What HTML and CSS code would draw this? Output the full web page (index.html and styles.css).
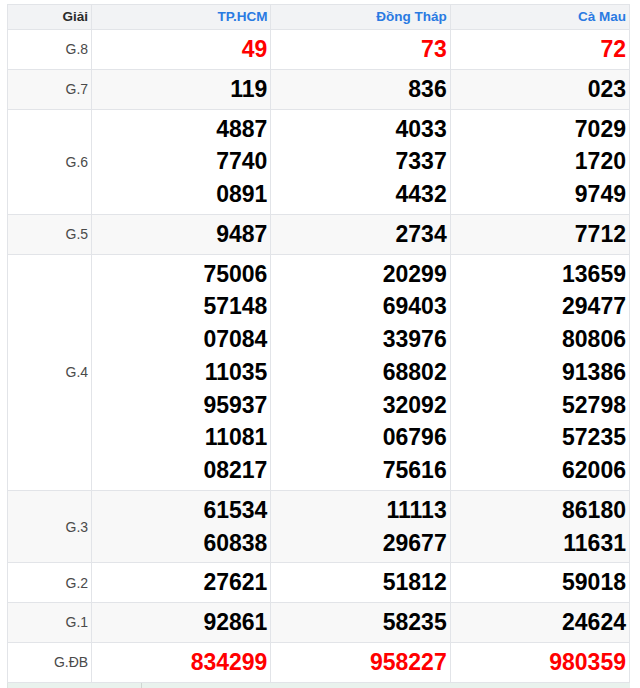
FILE: index.html
```html
<!DOCTYPE html>
<html lang="vi">
<head>
<meta charset="utf-8">
<title>Kết quả xổ số</title>
<link rel="stylesheet" href="styles.css">
</head>
<body>
<div class="wrap">
<table class="kq">
  <colgroup>
    <col class="c-label">
    <col class="c-prov">
    <col class="c-prov">
    <col class="c-prov">
  </colgroup>
  <thead>
    <tr>
      <th class="lbl">Giải</th>
      <th class="prov">TP.HCM</th>
      <th class="prov">Đồng Tháp</th>
      <th class="prov">Cà Mau</th>
    </tr>
  </thead>
  <tbody>
    <tr>
      <td class="lbl">G.8</td>
      <td class="num red">49</td>
      <td class="num red">73</td>
      <td class="num red">72</td>
    </tr>
    <tr class="alt">
      <td class="lbl">G.7</td>
      <td class="num">119</td>
      <td class="num">836</td>
      <td class="num">023</td>
    </tr>
    <tr>
      <td class="lbl">G.6</td>
      <td class="num"><div>4887</div><div>7740</div><div>0891</div></td>
      <td class="num"><div>4033</div><div>7337</div><div>4432</div></td>
      <td class="num"><div>7029</div><div>1720</div><div>9749</div></td>
    </tr>
    <tr class="alt">
      <td class="lbl">G.5</td>
      <td class="num">9487</td>
      <td class="num">2734</td>
      <td class="num">7712</td>
    </tr>
    <tr>
      <td class="lbl">G.4</td>
      <td class="num"><div>75006</div><div>57148</div><div>07084</div><div>11035</div><div>95937</div><div>11081</div><div>08217</div></td>
      <td class="num"><div>20299</div><div>69403</div><div>33976</div><div>68802</div><div>32092</div><div>06796</div><div>75616</div></td>
      <td class="num"><div>13659</div><div>29477</div><div>80806</div><div>91386</div><div>52798</div><div>57235</div><div>62006</div></td>
    </tr>
    <tr class="alt">
      <td class="lbl">G.3</td>
      <td class="num"><div>61534</div><div>60838</div></td>
      <td class="num"><div>11113</div><div>29677</div></td>
      <td class="num"><div>86180</div><div>11631</div></td>
    </tr>
    <tr>
      <td class="lbl">G.2</td>
      <td class="num">27621</td>
      <td class="num">51812</td>
      <td class="num">59018</td>
    </tr>
    <tr class="alt">
      <td class="lbl">G.1</td>
      <td class="num">92861</td>
      <td class="num">58235</td>
      <td class="num">24624</td>
    </tr>
    <tr>
      <td class="lbl">G.ĐB</td>
      <td class="num red">834299</td>
      <td class="num red">958227</td>
      <td class="num red">980359</td>
    </tr>
  </tbody>
</table>
<div class="next">
  <div class="next-a"></div>
  <div class="next-b"></div>
</div>
</div>
</body>
</html>
```

FILE: styles.css
```css
html, body {
  margin: 0;
  padding: 0;
  background: #ffffff;
}

body {
  font-family: "Liberation Sans", Arial, sans-serif;
  color: #000;
}

.wrap {
  padding: 4px 0 0 7px;
  width: 623px;
}

.kq {
  border-collapse: collapse;
  width: 623px;
  table-layout: fixed;
}

.c-label { width: 84px; }
.c-prov { width: 179px; }

.kq th,
.kq td {
  border: 1px solid #e2e4e8;
  text-align: right;
}

.kq th {
  background: #f2f3f5;
  font-size: 13.5px;
  font-weight: bold;
  height: 24px;
  padding: 0 3px 0 2px;
  line-height: 16px;
}

.kq th.lbl {
  color: #2b2b2b;
}

.kq th.prov {
  color: #2a7ae2;
}

.kq td.lbl {
  font-size: 14px;
  color: #4a4a4a;
  vertical-align: middle;
  padding: 0 3px 0 2px;
}

.kq td.num {
  font-size: 23px;
  font-weight: bold;
  line-height: 32.75px;
  padding: 3px 3px 3px 2px;
  vertical-align: middle;
}

.kq td.red {
  color: #ff0000;
}

.kq tr.alt td {
  background: #f8f8f8;
}

.next {
  display: flex;
  height: 20px;
  background: #e9f2ed;
  border-left: 1px solid #dfe3e1;
}

.next-a {
  width: 133px;
  border-right: 1px solid #cfd6d2;
}

.next-b {
  flex: 1;
}
```
